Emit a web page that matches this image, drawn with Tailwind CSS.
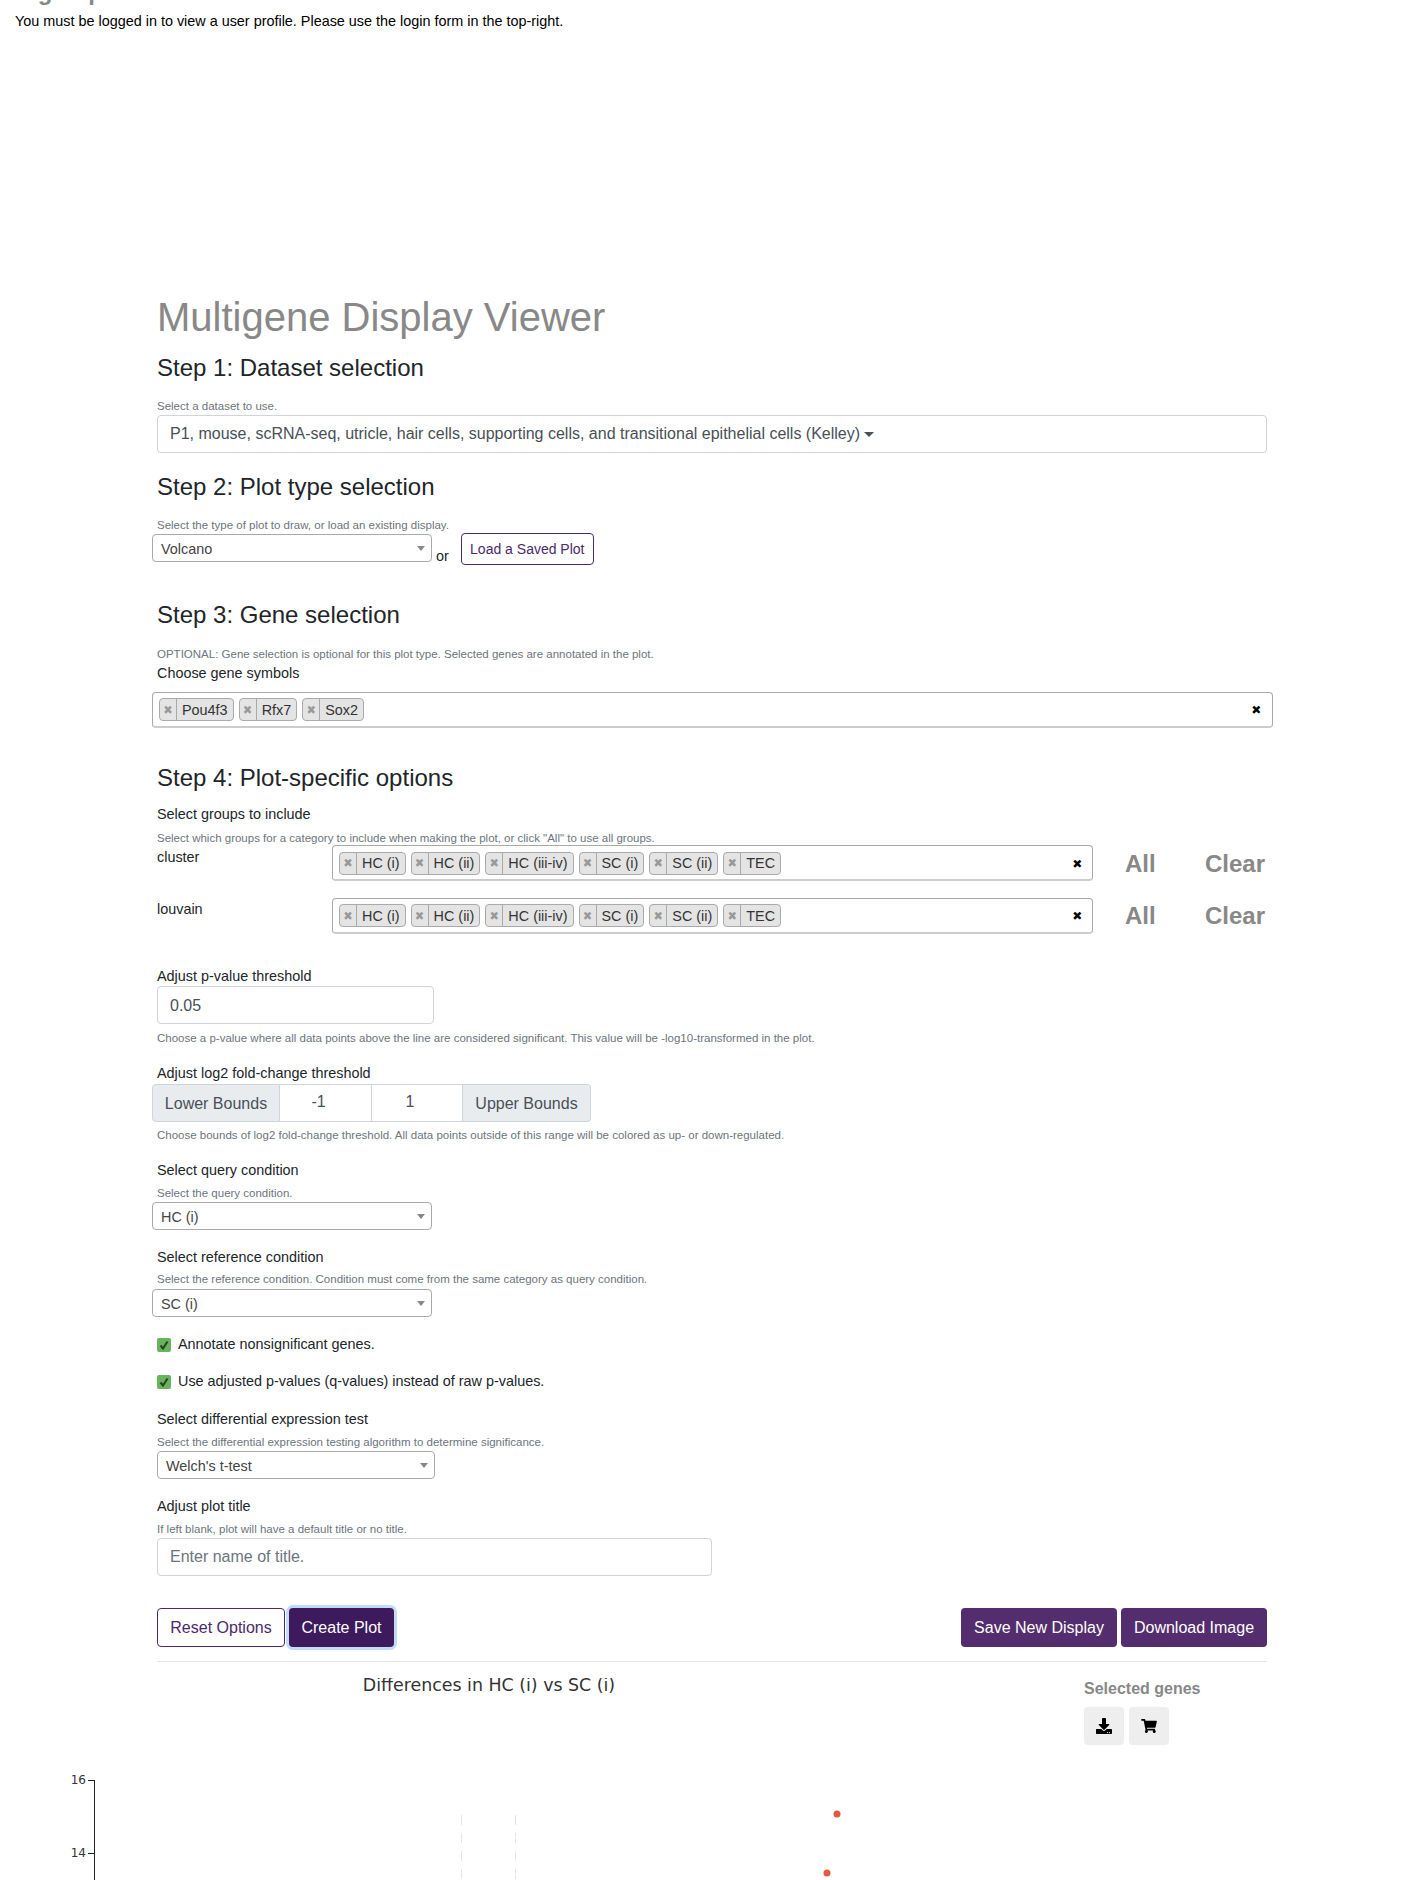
<!DOCTYPE html>
<html lang="en">
<head>
<meta charset="utf-8">
<title>Multigene Display Viewer</title>
<script src="https://cdn.jsdelivr.net/npm/@tailwindcss/browser@4"></script>
</head>
<body class="bg-white font-['Liberation_Sans',Arial,sans-serif] text-[14.4px] text-black">
<div class="h-[1880px] w-[1425px] overflow-hidden">
  <div class="h-[292px] overflow-hidden">
    <div class="-mt-[20px] ml-[15px] h-[24px] text-[24px] font-bold leading-[24px] text-[#888]">Sign up</div>
    <p class="mt-[7px] ml-[15px] h-[21px] leading-[21px]">You must be logged in to view a user profile. Please use the login form in the top-right.</p>
  </div>

  <main class="ml-[157px] w-[1110px]">
    <h1 class="h-[48px] pt-[1px] text-[40px] leading-[48px] text-[#888]">Multigene Display Viewer</h1>

    <h2 class="mt-[13px] h-[28px] pt-[1px] text-[24px] leading-[28px] text-[#212529]">Step 1: Dataset selection</h2>
    <p class="mt-[17px] h-[14px] pt-[1px] text-[11.5px] leading-[14px] text-[#6c757d]">Select a dataset to use.</p>
    <div class="mt-[3px] flex h-[38px] items-center rounded border border-[#ced4da] px-3 text-[16px] text-[#495057]">P1, mouse, scRNA-seq, utricle, hair cells, supporting cells, and transitional epithelial cells (Kelley)<span class="ml-[4px] h-0 w-0 border-x-[5px] border-t-[5px] border-x-transparent border-t-[#495057]"></span></div>

    <h2 class="mt-[20px] h-[28px] text-[24px] leading-[28px] text-[#212529]">Step 2: Plot type selection</h2>
    <p class="mt-[16px] h-[14px] pt-[1px] text-[11.5px] leading-[14px] text-[#6c757d]">Select the type of plot to draw, or load an existing display.</p>
    <div class="-ml-[5px] mt-[2px] flex h-[32px] items-start">
      <div class="mt-[1px] flex h-[28px] w-[280px] items-center justify-between rounded border border-[#aaa] pl-[8px] pr-[6px] pt-[3px] text-[#444]">Volcano<span class="mb-[3px] h-0 w-0 border-x-[4px] border-t-[5px] border-x-transparent border-t-[#888]"></span></div>
      <span class="ml-[4px] mt-[13px] text-[14.4px] leading-[20px] text-[#212529]">or</span>
      <button class="ml-[12px] h-[32px] w-[133px] rounded border border-[#4b2a6b] text-[14px] text-[#4b2a6b]">Load a Saved Plot</button>
    </div>

    <h2 class="mt-[35px] h-[28px] pt-[1px] text-[24px] leading-[28px] text-[#212529]">Step 3: Gene selection</h2>
    <p class="mt-[18px] h-[14px] pt-[1px] text-[11.5px] leading-[14px] text-[#6c757d]">OPTIONAL: Gene selection is optional for this plot type. Selected genes are annotated in the plot.</p>
    <div class="mt-[2px] h-[20px] pt-[1px] leading-[20px] text-[#212529]">Choose gene symbols</div>
    <div class="-ml-[5px] mt-[10px] flex h-[36px] w-[1121px] items-center gap-[5px] rounded border border-[#aaa] border-b-[2px] border-b-[#ccc] px-[6px]">
      <span class="flex h-[23px] items-center rounded border border-[#aaa] bg-[#e4e4e4]"><span class="flex h-full w-[17px] items-center justify-center border-r border-[#aaa] text-[12px] font-bold text-[#999] [-webkit-text-stroke:1px]">×</span><span class="pl-[5px] pr-[5px] pt-[2px] text-[#333]">Pou4f3</span></span>
      <span class="flex h-[23px] items-center rounded border border-[#aaa] bg-[#e4e4e4]"><span class="flex h-full w-[17px] items-center justify-center border-r border-[#aaa] text-[12px] font-bold text-[#999] [-webkit-text-stroke:1px]">×</span><span class="pl-[5px] pr-[5px] pt-[2px] text-[#333]">Rfx7</span></span>
      <span class="flex h-[23px] items-center rounded border border-[#aaa] bg-[#e4e4e4]"><span class="flex h-full w-[17px] items-center justify-center border-r border-[#aaa] text-[12px] font-bold text-[#999] [-webkit-text-stroke:1px]">×</span><span class="pl-[5px] pr-[5px] pt-[2px] text-[#333]">Sox2</span></span>
      <span class="ml-auto mr-[6px] text-[13px] font-bold leading-none [-webkit-text-stroke:1px]">×</span>
    </div>

    <h2 class="mt-[35px] h-[28px] pt-[1px] text-[24px] leading-[28px] text-[#212529]">Step 4: Plot-specific options</h2>
    <div class="mt-[12px] h-[20px] pt-[1px] leading-[20px] text-[#212529]">Select groups to include</div>
    <p class="mt-[7px] h-[14px] pt-[1px] text-[11.5px] leading-[14px] text-[#6c757d]">Select which groups for a category to include when making the plot, or click "All" to use all groups.</p>

    <div class="mt-[1px] flex h-[36px] items-start">
      <div class="w-[175px] leading-[24px] text-[#212529]">cluster</div>
      <div class="flex h-[36px] w-[761px] items-center gap-[5px] rounded border border-[#aaa] border-b-[2px] border-b-[#ccc] px-[6px] pt-[1px]">
        <span class="flex h-[23px] items-center rounded border border-[#aaa] bg-[#e4e4e4]"><span class="flex h-full w-[17px] items-center justify-center border-r border-[#aaa] text-[12px] font-bold text-[#999] [-webkit-text-stroke:1px]">×</span><span class="pl-[5px] pr-[5px] pt-[2px] text-[#333]">HC (i)</span></span>
        <span class="flex h-[23px] items-center rounded border border-[#aaa] bg-[#e4e4e4]"><span class="flex h-full w-[17px] items-center justify-center border-r border-[#aaa] text-[12px] font-bold text-[#999] [-webkit-text-stroke:1px]">×</span><span class="pl-[5px] pr-[5px] pt-[2px] text-[#333]">HC (ii)</span></span>
        <span class="flex h-[23px] items-center rounded border border-[#aaa] bg-[#e4e4e4]"><span class="flex h-full w-[17px] items-center justify-center border-r border-[#aaa] text-[12px] font-bold text-[#999] [-webkit-text-stroke:1px]">×</span><span class="pl-[5px] pr-[5px] pt-[2px] text-[#333]">HC (iii-iv)</span></span>
        <span class="flex h-[23px] items-center rounded border border-[#aaa] bg-[#e4e4e4]"><span class="flex h-full w-[17px] items-center justify-center border-r border-[#aaa] text-[12px] font-bold text-[#999] [-webkit-text-stroke:1px]">×</span><span class="pl-[5px] pr-[5px] pt-[2px] text-[#333]">SC (i)</span></span>
        <span class="flex h-[23px] items-center rounded border border-[#aaa] bg-[#e4e4e4]"><span class="flex h-full w-[17px] items-center justify-center border-r border-[#aaa] text-[12px] font-bold text-[#999] [-webkit-text-stroke:1px]">×</span><span class="pl-[5px] pr-[5px] pt-[2px] text-[#333]">SC (ii)</span></span>
        <span class="flex h-[23px] items-center rounded border border-[#aaa] bg-[#e4e4e4]"><span class="flex h-full w-[17px] items-center justify-center border-r border-[#aaa] text-[12px] font-bold text-[#999] [-webkit-text-stroke:1px]">×</span><span class="pl-[5px] pr-[5px] pt-[2px] text-[#333]">TEC</span></span>
        <span class="ml-auto mr-[5px] text-[13px] font-bold leading-none [-webkit-text-stroke:1px]">×</span>
      </div>
      <div class="ml-[32px] w-[80px] pt-[1px] text-[24px] font-bold leading-[36px] text-[#888]">All</div>
      <div class="pt-[1px] text-[24px] font-bold leading-[36px] text-[#888]">Clear</div>
    </div>

    <div class="mt-[17px] flex h-[36px] items-start">
      <div class="w-[175px] leading-[23px] text-[#212529]">louvain</div>
      <div class="flex h-[36px] w-[761px] items-center gap-[5px] rounded border border-[#aaa] border-b-[2px] border-b-[#ccc] px-[6px]">
        <span class="flex h-[23px] items-center rounded border border-[#aaa] bg-[#e4e4e4]"><span class="flex h-full w-[17px] items-center justify-center border-r border-[#aaa] text-[12px] font-bold text-[#999] [-webkit-text-stroke:1px]">×</span><span class="pl-[5px] pr-[5px] pt-[2px] text-[#333]">HC (i)</span></span>
        <span class="flex h-[23px] items-center rounded border border-[#aaa] bg-[#e4e4e4]"><span class="flex h-full w-[17px] items-center justify-center border-r border-[#aaa] text-[12px] font-bold text-[#999] [-webkit-text-stroke:1px]">×</span><span class="pl-[5px] pr-[5px] pt-[2px] text-[#333]">HC (ii)</span></span>
        <span class="flex h-[23px] items-center rounded border border-[#aaa] bg-[#e4e4e4]"><span class="flex h-full w-[17px] items-center justify-center border-r border-[#aaa] text-[12px] font-bold text-[#999] [-webkit-text-stroke:1px]">×</span><span class="pl-[5px] pr-[5px] pt-[2px] text-[#333]">HC (iii-iv)</span></span>
        <span class="flex h-[23px] items-center rounded border border-[#aaa] bg-[#e4e4e4]"><span class="flex h-full w-[17px] items-center justify-center border-r border-[#aaa] text-[12px] font-bold text-[#999] [-webkit-text-stroke:1px]">×</span><span class="pl-[5px] pr-[5px] pt-[2px] text-[#333]">SC (i)</span></span>
        <span class="flex h-[23px] items-center rounded border border-[#aaa] bg-[#e4e4e4]"><span class="flex h-full w-[17px] items-center justify-center border-r border-[#aaa] text-[12px] font-bold text-[#999] [-webkit-text-stroke:1px]">×</span><span class="pl-[5px] pr-[5px] pt-[2px] text-[#333]">SC (ii)</span></span>
        <span class="flex h-[23px] items-center rounded border border-[#aaa] bg-[#e4e4e4]"><span class="flex h-full w-[17px] items-center justify-center border-r border-[#aaa] text-[12px] font-bold text-[#999] [-webkit-text-stroke:1px]">×</span><span class="pl-[5px] pr-[5px] pt-[2px] text-[#333]">TEC</span></span>
        <span class="ml-auto mr-[5px] text-[13px] font-bold leading-none [-webkit-text-stroke:1px]">×</span>
      </div>
      <div class="ml-[32px] w-[80px] text-[24px] font-bold leading-[36px] text-[#888]">All</div>
      <div class="text-[24px] font-bold leading-[36px] text-[#888]">Clear</div>
    </div>

    <div class="mt-[31px] h-[20px] pt-[1px] leading-[20px] text-[#212529]">Adjust p-value threshold</div>
    <div class="mt-[1px] flex h-[38px] w-[277px] items-center rounded border border-[#ced4da] px-3 pt-[1px] text-[16px] text-[#495057]">0.05</div>
    <p class="mt-[6px] h-[14px] pt-[1px] text-[11.5px] leading-[14px] text-[#6c757d]">Choose a p-value where all data points above the line are considered significant. This value will be -log10-transformed in the plot.</p>

    <div class="mt-[18px] h-[20px] pt-[1px] leading-[20px] text-[#212529]">Adjust log2 fold-change threshold</div>
    <div class="-ml-[5px] mt-[2px] flex h-[38px] w-[439px] text-[16px] text-[#495057]">
      <div class="flex w-[128px] items-center justify-center rounded-l border border-[#ced4da] bg-[#e9ecef] pt-[1px]">Lower Bounds</div>
      <div class="flex w-[92px] items-center justify-center border-y border-r border-[#ced4da] pb-[3px] pr-[14px]">-1</div>
      <div class="flex w-[91px] items-center justify-center border-y border-r border-[#ced4da] pb-[3px] pr-[14px]">1</div>
      <div class="flex flex-1 items-center justify-center rounded-r border-y border-r border-[#ced4da] bg-[#e9ecef] pt-[1px]">Upper Bounds</div>
    </div>
    <p class="mt-[5px] h-[14px] pt-[1px] text-[11.5px] leading-[14px] text-[#6c757d]">Choose bounds of log2 fold-change threshold. All data points outside of this range will be colored as up- or down-regulated.</p>

    <div class="mt-[18px] h-[20px] pt-[1px] leading-[20px] text-[#212529]">Select query condition</div>
    <p class="mt-[7px] h-[14px] text-[11.5px] leading-[14px] text-[#6c757d]">Select the query condition.</p>
    <div class="-ml-[5px] mt-[2px] flex h-[28px] w-[280px] items-center justify-between rounded border border-[#aaa] pl-[8px] pr-[6px] pt-[3px] text-[#444]">HC (i)<span class="mb-[3px] h-0 w-0 border-x-[4px] border-t-[5px] border-x-transparent border-t-[#888]"></span></div>

    <div class="mt-[16px] h-[20px] pt-[1px] leading-[20px] text-[#212529]">Select reference condition</div>
    <p class="mt-[6px] h-[14px] text-[11.5px] leading-[14px] text-[#6c757d]">Select the reference condition. Condition must come from the same category as query condition.</p>
    <div class="-ml-[5px] mt-[3px] flex h-[28px] w-[280px] items-center justify-between rounded border border-[#aaa] pl-[8px] pr-[6px] pt-[3px] text-[#444]">SC (i)<span class="mb-[3px] h-0 w-0 border-x-[4px] border-t-[5px] border-x-transparent border-t-[#888]"></span></div>

    <label class="mt-[16px] flex h-[20px] items-center pt-[3px] text-[#212529]">
      <span class="mr-[7px] flex h-[14px] w-[14px] items-center justify-center rounded-[2px] bg-[#68b35e]"><svg viewBox="0 0 12 12" class="h-[12px] w-[12px]"><path d="M2.5 6.5 5 9.5 9.5 2.5" fill="none" stroke="#26441f" stroke-width="2"/></svg></span>Annotate nonsignificant genes.
    </label>
    <label class="mt-[18px] flex h-[20px] items-center pt-[1px] text-[#212529]">
      <span class="mr-[7px] flex h-[14px] w-[14px] items-center justify-center rounded-[2px] bg-[#68b35e]"><svg viewBox="0 0 12 12" class="h-[12px] w-[12px]"><path d="M2.5 6.5 5 9.5 9.5 2.5" fill="none" stroke="#26441f" stroke-width="2"/></svg></span>Use adjusted p-values (q-values) instead of raw p-values.
    </label>

    <div class="mt-[17px] h-[20px] pt-[1px] leading-[20px] text-[#212529]">Select differential expression test</div>
    <p class="mt-[6px] h-[14px] pt-[1px] text-[11.5px] leading-[14px] text-[#6c757d]">Select the differential expression testing algorithm to determine significance.</p>
    <div class="mt-[3px] flex h-[28px] w-[278px] items-center justify-between rounded border border-[#aaa] pl-[8px] pr-[6px] pt-[3px] text-[#444]">Welch's t-test<span class="mb-[3px] h-0 w-0 border-x-[4px] border-t-[5px] border-x-transparent border-t-[#888]"></span></div>

    <div class="mt-[16px] h-[20px] pt-[1px] leading-[20px] text-[#212529]">Adjust plot title</div>
    <p class="mt-[6px] h-[14px] pt-[1px] text-[11.5px] leading-[14px] text-[#6c757d]">If left blank, plot will have a default title or no title.</p>
    <div class="mt-[3px] flex h-[38px] w-[555px] items-center rounded border border-[#ced4da] px-3 text-[16px] text-[#6c757d]">Enter name of title.</div>

    <div class="mt-[32px] flex h-[39px] text-[16px]">
      <button class="h-[39px] w-[128px] rounded border border-[#4b2a6b] text-[#4b2a6b]">Reset Options</button>
      <button class="ml-[4px] h-[39px] w-[105px] rounded bg-[#3d1a5c] text-white ring-[3px] ring-[#c4dbf7]">Create Plot</button>
      <button class="ml-auto h-[39px] w-[156px] rounded bg-[#532d6d] text-white">Save New Display</button>
      <button class="ml-[4px] h-[39px] w-[146px] rounded bg-[#532d6d] text-white">Download Image</button>
    </div>
    <div class="mt-[14px] h-px bg-[#e5e5e5]"></div>
  </main>

  <section class="flex h-[218px]">
    <svg width="1084" height="202" viewBox="0 0 1084 202" class="mt-[16px] shrink-0 font-['DejaVu_Sans',sans-serif]">
      <text x="489" y="13" text-anchor="middle" font-size="17.400" fill="#333">Differences in HC (i) vs SC (i)</text>
      <path d="M94.500 102V202M88 102.500H94.500M88 175.500H94.500" stroke="#222" fill="none"/>
      <text x="86" y="106" text-anchor="end" font-size="12" fill="#333">16</text>
      <text x="86" y="179" text-anchor="end" font-size="12" fill="#333">14</text>
      <path d="M461.500 137V202M515.500 137V202" stroke="#e5e5e5" stroke-dasharray="10 8" fill="none"/>
      <circle cx="837" cy="136" r="3.500" fill="#e4593f"/>
      <circle cx="827" cy="195" r="3.500" fill="#e4593f"/>
    </svg>
    <div class="pt-[19px]">
      <div class="h-[16px] text-[16px] font-bold leading-[16px] text-[#888]">Selected genes</div>
      <div class="mt-[10px] flex gap-[5px]">
        <button class="flex h-[38px] w-[40px] items-center justify-center rounded bg-[#eee]"><svg viewBox="0 0 512 512" class="h-[16px] w-[16px]"><path d="M216 0h80c13.3 0 24 10.7 24 24v168h87.7c17.8 0 26.7 21.5 14.1 34.1L269.7 378.3c-7.5 7.5-19.8 7.5-27.3 0L90.1 226.1c-12.6-12.6-3.7-34.1 14.1-34.1H192V24c0-13.3 10.7-24 24-24zm296 376v112c0 13.3-10.7 24-24 24H24c-13.3 0-24-10.7-24-24V376c0-13.3 10.7-24 24-24h146.7l49 49c20.1 20.1 52.5 20.1 72.6 0l49-49H488c13.3 0 24 10.7 24 24zm-124 88c0-11-9-20-20-20s-20 9-20 20 9 20 20 20 20-9 20-20zm64 0c0-11-9-20-20-20s-20 9-20 20 9 20 20 20 20-9 20-20z"/></svg></button>
        <button class="flex h-[38px] w-[40px] items-center justify-center rounded bg-[#eee]"><svg viewBox="0 0 576 512" class="h-[14px] w-[16px]"><path d="M528.12 301.319l47.273-208C578.806 78.301 567.391 64 551.99 64H159.208l-9.166-44.81C147.758 8.021 137.93 0 126.529 0H24C10.745 0 0 10.745 0 24v16c0 13.255 10.745 24 24 24h69.883l70.248 343.435C147.325 417.1 136 435.222 136 456c0 30.928 25.072 56 56 56s56-25.072 56-56c0-15.674-6.447-29.835-16.824-40h209.647C430.447 426.165 424 440.326 424 456c0 30.928 25.072 56 56 56s56-25.072 56-56c0-22.172-12.888-41.332-31.579-50.405l5.517-24.276c3.413-15.018-8.002-29.319-23.403-29.319H218.117l-6.545-32h293.145c11.206 0 20.92-7.754 23.403-18.681z"/></svg></button>
      </div>
    </div>
  </section>
</div>
</body>
</html>
